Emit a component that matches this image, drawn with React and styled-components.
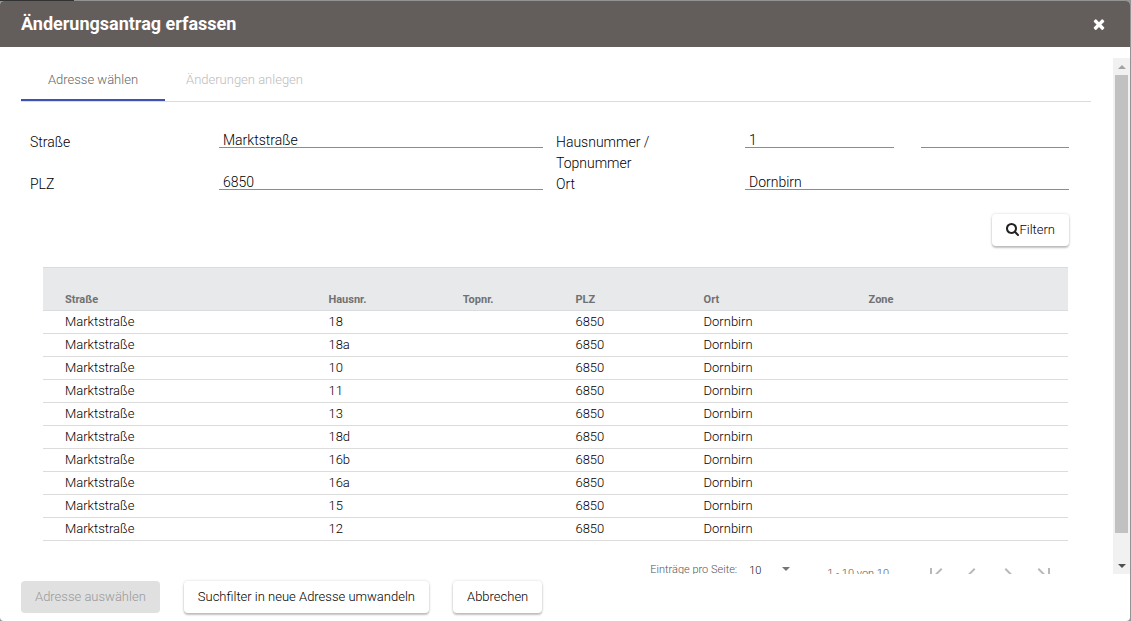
import React, { useRef, useState } from "react";
import styled, { createGlobalStyle } from "styled-components";

const GlobalStyle = createGlobalStyle`
  * {
    box-sizing: border-box;
  }

  body {
    margin: 0;
    font-family: Roboto, "Liberation Sans", sans-serif;
    font-size: 13px;
    font-weight: 300;
    color: #000;
  }

  button,
  input,
  select {
    font-family: inherit;
    font-weight: inherit;
    color: inherit;
  }
`;

// dialog
const Backdrop = styled.div`
  height: 100vh;
  padding: 1px 1px 0 0;
  background: linear-gradient(#333, #333) 0 0 / 74px 1px no-repeat, #939393;
`;

const Dialog = styled.section`
  display: flex;
  flex-direction: column;
  height: 100%;
  border-radius: 4px;
  overflow: hidden;
  background: white;
`;

const Header = styled.header`
  display: flex;
  flex: none;
  justify-content: space-between;
  align-items: center;
  height: 46px;
  padding: 0 21px;
  background: #635d5c;
  color: white;
`;

const Title = styled.h1`
  margin: 0;
  font-size: 18px;
  font-weight: 700;
  line-height: 24px;
`;

const CloseButton = styled.button`
  display: flex;
  padding: 2px;
  border: none;
  background: none;
  color: white;
  cursor: pointer;
`;

const Body = styled.div`
  display: flex;
  flex: 1;
  min-height: 0;
  margin-top: 11px;
`;

const Content = styled.div`
  flex: 1;
  min-width: 0;
  padding: 0 22px 0 21px;
  overflow-y: auto;
  scrollbar-width: none;
`;

const Footer = styled.footer`
  display: flex;
  flex: none;
  gap: 24px;
  padding: 7px 21px 8px;
`;

// scrollbar
const ScrollbarContainer = styled.div`
  display: flex;
  flex-direction: column;
  flex: none;
  width: 17px;
  background: #f1f1f1;
`;

const ScrollButton = styled.button`
  display: flex;
  justify-content: center;
  align-items: center;
  height: 17px;
  padding: 0;
  border: none;
  background: none;
  color: ${(props) => (props.$active ? "#505050" : "#a3a3a3")};
`;

const Track = styled.div`
  flex: 1;
  padding: 0 2px;
`;

const Thumb = styled.div`
  height: 95%;
  background: #c1c1c1;
`;

// tabs
const TabList = styled.div`
  display: flex;
  height: 44px;
  border-bottom: 1px solid #dcdcdc;
`;

const Tab = styled.button`
  min-width: 144px;
  padding: 2px 21px 0;
  border: none;
  border-bottom: 2px solid ${(props) => (props.$active ? "#3f51b5" : "transparent")};
  background: none;
  font-size: 13px;
  color: ${(props) => (props.$active ? "#666" : "#bcbcbc")};
`;

// filter
const FilterForm = styled.form`
  display: grid;
  grid-template-columns: 176fr 324fr 176fr 324fr;
  column-gap: 13px;
  align-items: start;
  margin: 30px 22px 0 9px;
  font-size: 14px;
  line-height: 21px;
`;

const InputGroup = styled.div`
  display: flex;
  gap: 27px;
`;

const Input = styled.input`
  width: 100%;
  min-width: 0;
  height: 16px;
  padding: 0 4px;
  border: none;
  border-bottom: 1px solid #8c8c8c;
  border-radius: 0;
  outline: none;
  background: none;
  font-size: 14px;
`;

const FilterActions = styled.div`
  display: flex;
  grid-column: 1 / -1;
  justify-content: flex-end;
  margin-top: 19px;
`;

const Button = styled.button`
  display: flex;
  align-items: center;
  height: 32px;
  padding: 0 14px 1px;
  border: none;
  border-radius: 4px;
  background: white;
  box-shadow: 0 2px 2px rgba(0, 0, 0, 0.22), 0 0 3px rgba(0, 0, 0, 0.16);
  font-size: 13px;
  white-space: nowrap;
  cursor: pointer;

  &:disabled {
    background: #e0e0e0;
    box-shadow: none;
    color: #999;
    cursor: default;
  }
`;

// table
const Table = styled.table`
  width: calc(100% - 45px);
  margin: 21px 23px 0 22px;
  border-collapse: separate;
  border-spacing: 0;
  table-layout: fixed;
`;

const HeadCell = styled.th`
  width: ${(props) => props.$width};
  height: 44px;
  padding: 22px 0 0 22px;
  border-top: 1px solid #dadde0;
  border-bottom: 1px solid #dadde0;
  background: #e8e9eb;
  font-size: 11px;
  font-weight: 700;
  line-height: 14px;
  text-align: left;
  color: #707172;
`;

const Cell = styled.td`
  height: 23px;
  padding: 0 0 0 22px;
  border-bottom: 1px solid #dcdcdc;
  line-height: 22px;
`;

// paginator
const PaginatorContainer = styled.div`
  display: flex;
  justify-content: flex-end;
  align-items: flex-start;
  height: 56px;
  padding: 17px 29px 0 0;
  font-size: 11px;
  line-height: 24px;
  color: #555;
`;

const PageSize = styled.label`
  display: flex;
  gap: 12px;
`;

const SelectWrapper = styled.span`
  display: flex;
  position: relative;
  width: 46px;
  color: #111;

  svg {
    position: absolute;
    top: 9px;
    right: 5px;
    color: #757575;
    pointer-events: none;
  }
`;

const Select = styled.select`
  appearance: none;
  width: 100%;
  height: 24px;
  padding: 0;
  border: none;
  background: none;
  font-size: 11px;
`;

const Range = styled.span`
  margin: 4px 29px 0 32px;
`;

const PageButton = styled.button`
  display: flex;
  justify-content: center;
  width: 36px;
  padding: 4px 0;
  border: none;
  background: none;

  &:disabled {
    color: #b8b8b8;
  }
`;

const CloseIcon = () => (
  <svg width="16" height="16" viewBox="0 0 1792 1792" fill="currentColor">
    <path d="M1490 1322q0 40-28 68l-136 136q-28 28-68 28t-68-28l-294-294-294 294q-28 28-68 28t-68-28l-136-136q-28-28-28-68t28-68l294-294-294-294q-28-28-28-68t28-68l136-136q28-28 68-28t68 28l294 294 294-294q28-28 68-28t68 28l136 136q28 28 28 68t-28 68l-294 294 294 294q28 28 28 68z" />
  </svg>
);

const SearchIcon = () => (
  <svg width="13" height="13" viewBox="64 128 1664 1664" fill="#222">
    <path d="M1216 832q0-185-131.5-316.5t-316.5-131.5-316.5 131.5-131.5 316.5 131.5 316.5 316.5 131.5 316.5-131.5 131.5-316.5zm512 832q0 52-38 90t-90 38q-54 0-90-38l-343-342q-179 124-399 124-143 0-273.5-55.5t-225-150-150-225-55.5-273.5 55.5-273.5 150-225 225-150 273.5-55.5 273.5 55.5 225 150 150 225 55.5 273.5q0 220-124 399l343 343q37 37 37 90z" />
  </svg>
);

const Triangle = ({ up }) => (
  <svg width="8" height="4" viewBox="0 0 8 4" fill="currentColor">
    <path d={up ? "M0 4l4-4 4 4z" : "M0 0h8l-4 4z"} />
  </svg>
);

const pageIcons = [
  {
    label: "Erste Seite",
    path: "M18.41 16.59L13.82 12l4.59-4.59L17 6l-6 6 6 6zM6 6h2v12H6z",
  },
  {
    label: "Vorherige Seite",
    path: "M15.41 7.41L14 6l-6 6 6 6 1.41-1.41L10.83 12z",
  },
  {
    label: "Nächste Seite",
    path: "M10 6L8.59 7.41 13.17 12l-4.58 4.59L10 18l6-6z",
  },
  {
    label: "Letzte Seite",
    path: "M5.59 7.41L10.18 12l-4.59 4.59L7 18l6-6-6-6zM16 6h2v12h-2z",
  },
];

const columns = [
  { title: "Straße", width: "25.7%" },
  { title: "Hausnr.", width: "13.1%" },
  { title: "Topnr.", width: "11%" },
  { title: "PLZ", width: "12.5%" },
  { title: "Ort", width: "16.1%" },
  { title: "Zone", width: "21.6%" },
];

const houseNumbers = ["18", "18a", "10", "11", "13", "18d", "16b", "16a", "15", "12"];

function Scrollbar({ onScroll }) {
  return (
    <ScrollbarContainer>
      <ScrollButton aria-label="Nach oben" onClick={() => onScroll(-40)}>
        <Triangle up />
      </ScrollButton>
      <Track>
        <Thumb />
      </Track>
      <ScrollButton $active aria-label="Nach unten" onClick={() => onScroll(40)}>
        <Triangle />
      </ScrollButton>
    </ScrollbarContainer>
  );
}

function AddressFilter() {
  const [filter, setFilter] = useState({
    street: "Marktstraße",
    number: "1",
    top: "",
    zip: "6850",
    city: "Dornbirn",
  });

  const bind = (name) => ({
    id: name,
    value: filter[name],
    onChange: (e) => setFilter({ ...filter, [name]: e.target.value }),
  });

  return (
    <FilterForm onSubmit={(e) => e.preventDefault()}>
      <label htmlFor="street">Straße</label>
      <Input {...bind("street")} />
      <label htmlFor="number">
        Hausnummer /<br />
        Topnummer
      </label>
      <InputGroup>
        <Input {...bind("number")} />
        <Input {...bind("top")} aria-label="Topnummer" />
      </InputGroup>
      <label htmlFor="zip">PLZ</label>
      <Input {...bind("zip")} />
      <label htmlFor="city">Ort</label>
      <Input {...bind("city")} />
      <FilterActions>
        <Button type="submit">
          <SearchIcon />
          Filtern
        </Button>
      </FilterActions>
    </FilterForm>
  );
}

function AddressTable() {
  return (
    <Table>
      <thead>
        <tr>
          {columns.map((column) => (
            <HeadCell key={column.title} $width={column.width}>
              {column.title}
            </HeadCell>
          ))}
        </tr>
      </thead>
      <tbody>
        {houseNumbers.map((number) => (
          <tr key={number}>
            <Cell>Marktstraße</Cell>
            <Cell>{number}</Cell>
            <Cell />
            <Cell>6850</Cell>
            <Cell>Dornbirn</Cell>
            <Cell />
          </tr>
        ))}
      </tbody>
    </Table>
  );
}

function Paginator() {
  return (
    <PaginatorContainer>
      <PageSize>
        Einträge pro Seite:
        <SelectWrapper>
          <Select defaultValue="10">
            <option>10</option>
            <option>25</option>
            <option>50</option>
          </Select>
          <Triangle />
        </SelectWrapper>
      </PageSize>
      <Range>1 - 10 von 10</Range>
      {pageIcons.map((icon) => (
        <PageButton key={icon.label} aria-label={icon.label} disabled>
          <svg width="24" height="24" viewBox="0 0 24 24" fill="currentColor">
            <path d={icon.path} />
          </svg>
        </PageButton>
      ))}
    </PaginatorContainer>
  );
}

export default function App() {
  const contentRef = useRef(null);

  return (
    <Backdrop>
      <GlobalStyle />
      <Dialog role="dialog" aria-labelledby="dialog-title">
        <Header>
          <Title id="dialog-title">Änderungsantrag erfassen</Title>
          <CloseButton aria-label="Schließen">
            <CloseIcon />
          </CloseButton>
        </Header>
        <Body>
          <Content ref={contentRef}>
            <TabList role="tablist">
              <Tab role="tab" aria-selected="true" $active>
                Adresse wählen
              </Tab>
              <Tab role="tab" aria-selected="false" disabled>
                Änderungen anlegen
              </Tab>
            </TabList>
            <AddressFilter />
            <AddressTable />
            <Paginator />
          </Content>
          <Scrollbar onScroll={(top) => contentRef.current.scrollBy({ top })} />
        </Body>
        <Footer>
          <Button disabled>Adresse auswählen</Button>
          <Button>Suchfilter in neue Adresse umwandeln</Button>
          <Button>Abbrechen</Button>
        </Footer>
      </Dialog>
    </Backdrop>
  );
}
